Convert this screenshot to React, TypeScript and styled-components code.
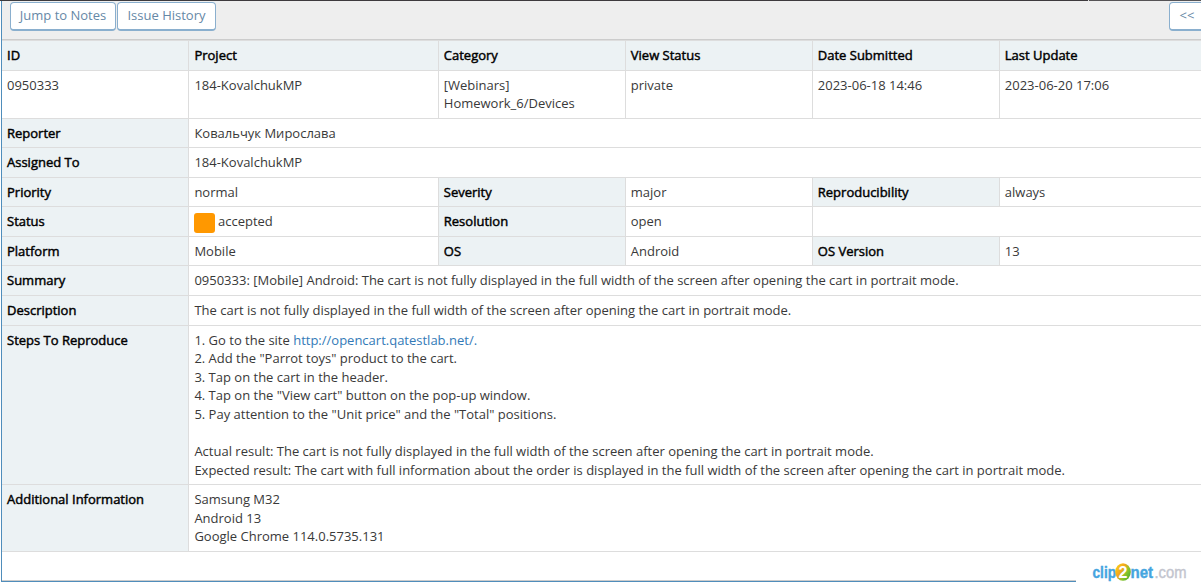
import React from "react";
import styled, { createGlobalStyle } from "styled-components";

const GlobalStyle = createGlobalStyle`
  html, body { margin: 0; background: #fff; overflow: hidden; }
  * { box-sizing: border-box; }
  body { font: 13px/18.57px "Open Sans", sans-serif; color: #393939; }
`;

const Page = styled.div`
  width: 1201px;
  height: 583px;
  display: flex;
  flex-direction: column;
  position: relative;
  overflow: hidden;
`;

const TopEdge = styled.div`
  height: 1px;
  flex: none;
  background: linear-gradient(90deg, #3d3a3d 1088px, #ddd 1088px, #ddd 1089px, #555356 1089px);
`;

const Panel = styled.main`
  height: 581px;
  flex: none;
  margin-left: 1px;
  border-left: 1px solid #4f8dbb;
  border-bottom: 1px solid #4f8dbb;
`;

const Toolbar = styled.div`
  height: 39px;
  display: flex;
  gap: 1px;
  padding: 1px 0 0 8px;
  background: #eee;
  border-bottom: 1px solid #ccc;
`;

const ToolButton = styled.button<{ $width: number; $last?: boolean }>`
  width: ${(p) => p.$width}px;
  height: 29px;
  flex: none;
  padding: 0 0 1px;
  margin-left: ${(p) => (p.$last ? "auto" : "0")};
  margin-right: ${(p) => (p.$last ? "-4px" : "0")};
  border: 1px solid #8aafce;
  border-bottom-width: 2px;
  border-radius: 4px;
  background: #fff;
  color: #6688a6;
  font: inherit;
  white-space: nowrap;
`;

const Table = styled.div`
  border-top: 1px solid #ddd;
`;

const Row = styled.div<{ $height: number }>`
  height: ${(p) => p.$height}px;
  display: grid;
  grid-template-columns: 186px 250px 187px 187px 187px 1fr;
  border-bottom: 1px solid #ddd;
`;

const Cell = styled.div<{ $span?: number; $multiline?: boolean }>`
  grid-column: span ${(p) => p.$span ?? 1};
  padding: ${(p) => (p.$multiline ? "4.7px" : "5px")} 0 0 4.8px;
  border-left: 1px solid #ddd;
  white-space: pre;
  &:first-child { border-left: 0; padding-left: 5px; }
  &:nth-child(2) { padding-left: 5.4px; }
`;

const Label = styled(Cell)`
  background: #ecf2f4;
  color: #000;
  -webkit-text-stroke: 0.45px #000;
`;

const StatusCell = styled(Cell)`
  display: flex;
  align-items: flex-start;
  gap: 3px;
`;

const Swatch = styled.span`
  flex: none;
  width: 21px;
  height: 20px;
  margin: 1px 0 0 -0.4px;
  border-radius: 3px;
  background: #ff9800;
`;

const Link = styled.a`
  color: #337ab7;
`;

const Footer = styled.div`
  height: 29px;
  border-bottom: 1px solid #ccc;
`;

const Watermark = styled.div`
  position: absolute;
  right: 0;
  bottom: 0;
  width: 125px;
  height: 29px;
  background: #fff;
`;

const WatermarkLogo = () => (
  <svg width="125" height="29" viewBox="0 0 125 29" fontFamily="Liberation Sans, sans-serif">
    <defs>
      <linearGradient id="badge" x1="0" y1="0" x2="1" y2="0.7">
        <stop offset="0.1" stopColor="#f8d018" />
        <stop offset="0.45" stopColor="#f5a51c" />
        <stop offset="0.75" stopColor="#86c52b" />
        <stop offset="1" stopColor="#54ad31" />
      </linearGradient>
    </defs>
    <g strokeWidth="0.4">
      <text x="16.5" y="23.5" fontSize="16" fontWeight="700" fill="#45a5df" stroke="#45a5df" textLength="23.5" lengthAdjust="spacingAndGlyphs">clip</text>
      <text x="54.5" y="23.5" fontSize="16" fontWeight="700" fill="#45a5df" stroke="#45a5df" textLength="22.5" lengthAdjust="spacingAndGlyphs">net</text>
      <text x="78.5" y="23.5" fontSize="16" fill="#c3c5ce" stroke="#c3c5ce" textLength="32" lengthAdjust="spacingAndGlyphs">.com</text>
    </g>
    <ellipse cx="47" cy="18" rx="7.8" ry="8.8" fill="url(#badge)" />
    <text x="47" y="23.5" fontSize="16" fontWeight="700" fill="#fff" textAnchor="middle">2</text>
  </svg>
);

export default function App() {
  return (
    <Page>
      <GlobalStyle />
      <TopEdge />
      <Panel>
        <Toolbar>
          <ToolButton $width={106}>Jump to Notes</ToolButton>
          <ToolButton $width={99}>Issue History</ToolButton>
          <ToolButton $width={36} $last>&lt;&lt;</ToolButton>
        </Toolbar>
        <Table>
          <Row $height={30}>
            <Label>ID</Label>
            <Label>Project</Label>
            <Label>Category</Label>
            <Label>View Status</Label>
            <Label>Date Submitted</Label>
            <Label>Last Update</Label>
          </Row>
          <Row $height={48}>
            <Cell>0950333</Cell>
            <Cell>184-KovalchukMP</Cell>
            <Cell $multiline>{"[Webinars]\nHomework_6/Devices"}</Cell>
            <Cell>private</Cell>
            <Cell>2023-06-18 14:46</Cell>
            <Cell>2023-06-20 17:06</Cell>
          </Row>
          <Row $height={29}>
            <Label>Reporter</Label>
            <Cell $span={5}>Ковальчук Мирослава</Cell>
          </Row>
          <Row $height={30}>
            <Label>Assigned To</Label>
            <Cell $span={5}>184-KovalchukMP</Cell>
          </Row>
          <Row $height={29}>
            <Label>Priority</Label>
            <Cell>normal</Cell>
            <Label>Severity</Label>
            <Cell>major</Cell>
            <Label>Reproducibility</Label>
            <Cell>always</Cell>
          </Row>
          <Row $height={30}>
            <Label>Status</Label>
            <StatusCell><Swatch />accepted</StatusCell>
            <Label>Resolution</Label>
            <Cell>open</Cell>
            <Cell $span={2} />
          </Row>
          <Row $height={29}>
            <Label>Platform</Label>
            <Cell>Mobile</Cell>
            <Label>OS</Label>
            <Cell>Android</Cell>
            <Label>OS Version</Label>
            <Cell>13</Cell>
          </Row>
          <Row $height={30}>
            <Label>Summary</Label>
            <Cell $span={5}>0950333: [Mobile] Android: The cart is not fully displayed in the full width of the screen after opening the cart in portrait mode.</Cell>
          </Row>
          <Row $height={30}>
            <Label>Description</Label>
            <Cell $span={5}>The cart is not fully displayed in the full width of the screen after opening the cart in portrait mode.</Cell>
          </Row>
          <Row $height={159}>
            <Label>Steps To Reproduce</Label>
            <Cell $span={5} $multiline>
              {"1. Go to the site "}
              <Link>http://opencart.qatestlab.net/.</Link>
              {'\n2. Add the "Parrot toys" product to the cart.\n3. Tap on the cart in the header.\n4. Tap on the "View cart" button on the pop-up window.\n5. Pay attention to the "Unit price" and the "Total" positions.\n\nActual result: The cart is not fully displayed in the full width of the screen after opening the cart in portrait mode.\nExpected result: The cart with full information about the order is displayed in the full width of the screen after opening the cart in portrait mode.'}
            </Cell>
          </Row>
          <Row $height={67}>
            <Label>Additional Information</Label>
            <Cell $span={5}>{"Samsung M32\nAndroid 13\nGoogle Chrome 114.0.5735.131"}</Cell>
          </Row>
        </Table>
        <Footer />
      </Panel>
      <Watermark>
        <WatermarkLogo />
      </Watermark>
    </Page>
  );
}
